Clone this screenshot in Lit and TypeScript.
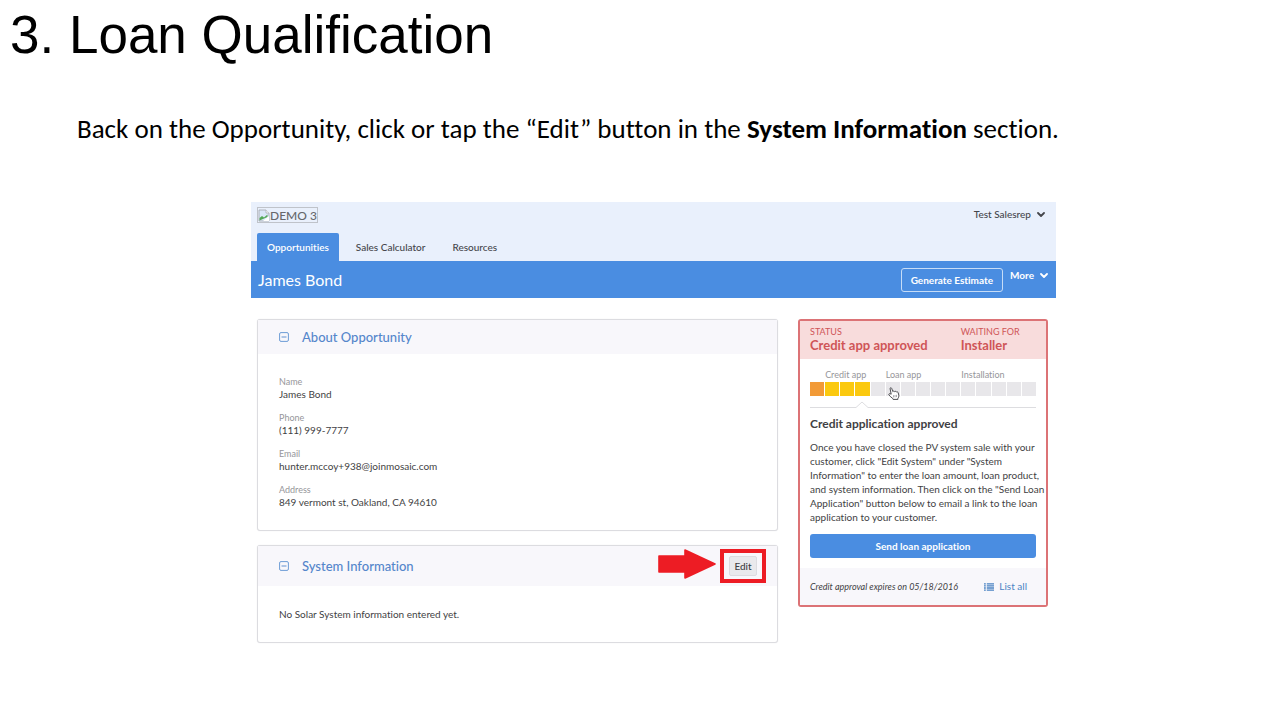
import { LitElement, html, css, svg } from "lit";
import { customElement, property } from "lit/decorators.js";
import { classMap } from "lit/directives/class-map.js";

const chevron = html`<svg class="chevron" viewBox="0 0 8 8" width="8" height="8" aria-hidden="true">
  <path d="M1 3 4 6 7 3" fill="none" stroke="currentColor" stroke-width="1.8" stroke-linecap="round" stroke-linejoin="round" />
</svg>`;

@customElement("info-panel")
export class InfoPanel extends LitElement {
  @property() heading = "";
  @property({ type: Boolean }) tall = false;

  static styles = css`
    :host {
      display: block;
      border: 1px solid #dcdce0;
      border-radius: 3px;
      box-shadow: 0 0 1px #dcdce0;
      background: #fff;
    }
    .head {
      display: flex;
      align-items: center;
      gap: 13px;
      height: 34px;
      padding: 0 20px 0 21px;
      background: #f8f7fb;
    }
    .tall {
      height: 40px;
    }
    .toggle {
      display: flex;
      padding: 0;
      border: 0;
      background: none;
    }
    h3 {
      flex: 1;
      margin: 0;
      font-size: 13px;
      line-height: 16px;
      font-weight: 500;
      color: #5586cb;
    }
    .body {
      padding: 21px;
    }
  `;

  render() {
    return html`
      <header class=${classMap({ head: true, tall: this.tall })}>
        <button class="toggle" aria-label="Collapse ${this.heading}">
          <svg viewBox="0 0 10 10" width="10" height="10" aria-hidden="true">
            <rect x="0.6" y="0.6" width="8.8" height="8.8" rx="1.4" fill="none" stroke="#6d9cd6" stroke-width="1" />
            <path d="M2.5 5H7.5" stroke="#6d9cd6" stroke-width="1.1" />
          </svg>
        </button>
        <h3>${this.heading}</h3>
        <slot name="action"></slot>
      </header>
      <div class="body"><slot></slot></div>
    `;
  }
}

@customElement("status-card")
export class StatusCard extends LitElement {
  private segments = Array.from({ length: 15 }, (_, i) => (i === 0 ? "active" : i < 4 ? "done" : ""));

  static styles = css`
    :host {
      display: block;
      border: 2px solid #dc7376;
      border-radius: 3px;
      background: #fff;
      color: #3f3f44;
    }
    .head {
      display: grid;
      grid-template-columns: 2fr 1fr;
      padding: 5px 10px 7px;
      background: #f8dcdc;
      color: #cf5557;
    }
    .head p {
      margin: 0;
    }
    .caption {
      font-size: 9px;
      line-height: 12px;
    }
    .value {
      font-size: 13px;
      line-height: 14px;
      font-weight: 700;
    }
    .main {
      padding: 10px 10px;
    }
    .progress {
      position: relative;
      display: grid;
      grid-template-columns: repeat(15, 1fr);
      column-gap: 1px;
      row-gap: 2px;
    }
    .step {
      font-size: 9px;
      line-height: 11px;
      color: #96969a;
      white-space: nowrap;
    }
    .credit {
      grid-column: 2 / 6;
    }
    .loan {
      grid-column: 6 / 11;
    }
    .install {
      grid-column: 11 / 16;
    }
    .segment {
      height: 14px;
      background: #e8e7ea;
    }
    .active {
      background: #f29a37;
    }
    .done {
      background: #fbc90f;
    }
    .cursor {
      position: absolute;
      left: 78px;
      top: 18px;
    }
    .divider {
      display: flex;
      height: 7px;
      margin-top: 5px;
    }
    .divider::before,
    .divider::after {
      content: "";
      border-bottom: 1px solid #dddde0;
    }
    .divider::before {
      flex: 0 0 46px;
    }
    .divider::after {
      flex: 1;
    }
    h4 {
      margin: 8px 0;
      font-size: 12px;
      line-height: 16px;
      font-weight: 700;
    }
    .text {
      margin: 0 -10px 10px 0;
      font-size: 10px;
      line-height: 14px;
    }
    .send {
      display: block;
      width: 100%;
      height: 24px;
      padding: 0;
      border: 0;
      border-radius: 3px;
      background: #4a8de1;
      color: #fff;
      font: 700 10px/24px Lato, sans-serif;
      font-variant-ligatures: none;
    }
    .foot {
      display: flex;
      align-items: center;
      justify-content: space-between;
      height: 37px;
      padding: 0 19px 0 10px;
      background: #f8f7fb;
      font-size: 9px;
    }
    .list {
      display: flex;
      align-items: center;
      gap: 5px;
      color: #4b84c4;
      font-size: 10px;
      text-decoration: none;
    }
  `;

  render() {
    return html`
      <header class="head">
        <div><p class="caption">STATUS</p><p class="value">Credit app approved</p></div>
        <div><p class="caption">WAITING FOR</p><p class="value">Installer</p></div>
      </header>
      <div class="main">
        <div class="progress">
          <span class="step credit">Credit app</span>
          <span class="step loan">Loan app</span>
          <span class="step install">Installation</span>
          ${this.segments.map((state) => html`<span class="segment ${state}"></span>`)}
          <svg class="cursor" viewBox="0 0 12 13" width="12" height="13" aria-hidden="true">
            <path d="M3.2 7.2 2.1 1.8C1.9.6 3.3.3 3.7 1.4L4.8 4.6C5.2 3.9 6.3 3.9 6.6 4.7 7.2 4.1 8.1 4.3 8.4 5 9.2 4.6 10 4.9 10.2 5.8L10.8 8.2C11 9.5 10.6 10.5 9.9 11.4V12.4H5.1L4.7 11.4C3.5 10.6 2.1 9.3 1 8.1.3 7.2 1.3 6.4 2.2 6.8Z" fill="#fff" stroke="#3b3b40" stroke-width="0.9" stroke-linejoin="round" />
            <path d="M5.5 8.2V10.4M7 8V10.3M8.5 7.8V10.1" stroke="#77777c" stroke-width="0.6" />
          </svg>
        </div>
        <div class="divider">
          <svg viewBox="0 0 12 7" width="12" height="7" aria-hidden="true">
            <path d="M0 6.5 6 1 12 6.5" fill="none" stroke="#dddde0" stroke-width="1" />
          </svg>
        </div>
        <h4>Credit application approved</h4>
        <p class="text">
          Once you have closed the PV system sale with your customer, click "Edit System" under "System Information" to
          enter the loan amount, loan product, and system information. Then click on the "Send Loan Application" button
          below to email a link to the loan application to your customer.
        </p>
        <button class="send">Send loan application</button>
      </div>
      <footer class="foot">
        <em>Credit approval expires on 05/18/2016</em>
        <a class="list" href="#list">
          <svg viewBox="0 0 10 8" width="10" height="8" aria-hidden="true">
            ${[0.2, 2.3, 4.4, 6.5].map((y) => svg`<path d="M0 ${y + 0.6}H1.8M2.8 ${y + 0.6}H10" stroke="#4b84c4" stroke-width="1.3" />`)}
          </svg>
          List all
        </a>
      </footer>
    `;
  }
}

@customElement("app-root")
export class AppRoot extends LitElement {
  private fields = [
    ["Name", "James Bond"],
    ["Phone", "(111) 999-7777"],
    ["Email", "hunter.mccoy+938@joinmosaic.com"],
    ["Address", "849 vermont st, Oakland, CA 94610"],
  ];

  static styles = css`
    :host {
      display: block;
      min-height: 100vh;
      background: #fff;
      color: #000;
      font-family: Lato, sans-serif;
      font-variant-ligatures: none;
    }
    h1 {
      margin: 0;
      padding: 5px 10px 0;
      font: 400 53px/60px "Liberation Sans", sans-serif;
    }
    .intro {
      margin: 48px 77px 0;
      font-family: Carlito, Calibri, Lato, sans-serif;
      font-size: 27px;
      line-height: 32px;
    }
    .shot {
      margin: 57px 224px 0 251px;
      font-size: 10px;
      line-height: 13px;
      color: #3f3f44;
    }
    .top {
      display: flex;
      flex-direction: column;
      justify-content: space-between;
      height: 59px;
      padding: 0 11px 0 6px;
      box-sizing: border-box;
      background: #e9f0fc;
    }
    .row {
      display: flex;
      align-items: flex-start;
      justify-content: space-between;
      padding-top: 5px;
    }
    .logo {
      display: flex;
      align-items: center;
      height: 14px;
      border: 1px solid #bfc3ca;
      font-size: 12px;
      font-weight: 500;
      color: #66676b;
    }
    .menu {
      display: flex;
      align-items: center;
      gap: 6px;
      height: 14px;
      padding: 0;
      border: 0;
      background: none;
      color: #45464b;
      font: 500 10px/14px Lato, sans-serif;
      font-variant-ligatures: none;
    }
    nav {
      display: flex;
      gap: 7px;
    }
    nav a {
      padding: 0 10px;
      border-radius: 2px 2px 0 0;
      color: #45464b;
      font-weight: 500;
      line-height: 28px;
      text-decoration: none;
    }
    nav .current {
      background: #4a8de1;
      color: #fff;
      font-weight: 600;
    }
    .title {
      display: flex;
      align-items: center;
      gap: 7px;
      height: 37px;
      padding: 0 8px 0 7px;
      background: #4a8de1;
      color: #fff;
    }
    h2 {
      flex: 1;
      margin: 0;
      font-size: 16px;
      line-height: 22px;
      font-weight: 400;
    }
    .estimate {
      height: 24px;
      padding: 0 9px;
      border: 1px solid #c6dcf7;
      border-radius: 3px;
      background: none;
      color: #fff;
      font: 700 10px/22px Lato, sans-serif;
      font-variant-ligatures: none;
    }
    .title .menu {
      align-self: flex-start;
      height: 28px;
      color: #fff;
      font-weight: 700;
    }
    .content {
      display: grid;
      grid-template-columns: minmax(0, 1fr) 250px;
      gap: 20px;
      align-items: start;
      padding: 21px 8px 0 6px;
    }
    .panels {
      display: grid;
      gap: 14px;
    }
    dl {
      display: grid;
      gap: 10px;
      margin: 0;
    }
    dt {
      font-size: 9px;
      color: #96969a;
    }
    dd {
      margin: 0;
    }
    .empty {
      margin: 0;
      line-height: 14px;
    }
    .action {
      position: relative;
      display: flex;
    }
    .edit {
      width: 28px;
      height: 20px;
      padding: 0;
      border: 1px solid #dcdce0;
      border-radius: 2px;
      background: #e9e9ec;
      color: #3f3f44;
      font: 500 10px/18px Lato, sans-serif;
    }
    .frame {
      position: absolute;
      inset: -7px -9px;
      border: 4px solid #ed1c24;
    }
    .arrow {
      position: absolute;
      right: 41px;
      top: -7px;
    }
  `;

  render() {
    return html`
      <h1>3. Loan Qualification</h1>
      <p class="intro">
        Back on the Opportunity, click or tap the “Edit” button in the <strong>System Information</strong> section.
      </p>
      <section class="shot">
        <header class="top">
          <div class="row">
            <div class="logo">
              <svg viewBox="0 0 12 13" width="12" height="13" aria-hidden="true">
                <path d="M1 1H8L11 4V12H1Z" fill="#dbe7f8" stroke="#a9adb4" stroke-width="0.9" />
                <path d="M8 1V4H11" fill="#fff" stroke="#a9adb4" stroke-width="0.8" />
                <path d="M1.5 11.6V9L4 7 6 8.5 9.5 5.5V8Z" fill="#54a957" />
                <path d="M5 12 11 7V12Z" fill="#fff" />
              </svg>
              <span>DEMO 3</span>
            </div>
            <button class="menu">Test Salesrep ${chevron}</button>
          </div>
          <nav>
            <a class="current" href="#opportunities">Opportunities</a>
            <a href="#calculator">Sales Calculator</a>
            <a href="#resources">Resources</a>
          </nav>
        </header>
        <div class="title">
          <h2>James Bond</h2>
          <button class="estimate">Generate Estimate</button>
          <button class="menu">More ${chevron}</button>
        </div>
        <div class="content">
          <div class="panels">
            <info-panel heading="About Opportunity">
              <dl>
                ${this.fields.map(([label, value]) => html`<div><dt>${label}</dt><dd>${value}</dd></div>`)}
              </dl>
            </info-panel>
            <info-panel heading="System Information" tall>
              <div class="action" slot="action">
                <button class="edit">Edit</button>
                <span class="frame"></span>
                <svg class="arrow" viewBox="0 0 58 30" width="58" height="30" aria-hidden="true">
                  <path d="M1 7H27V1L57 15 27 29V23H1Z" fill="#ed1c24" stroke="#ed1c24" stroke-width="1.6" stroke-linejoin="round" />
                </svg>
              </div>
              <p class="empty">No Solar System information entered yet.</p>
            </info-panel>
          </div>
          <status-card></status-card>
        </div>
      </section>
    `;
  }
}
